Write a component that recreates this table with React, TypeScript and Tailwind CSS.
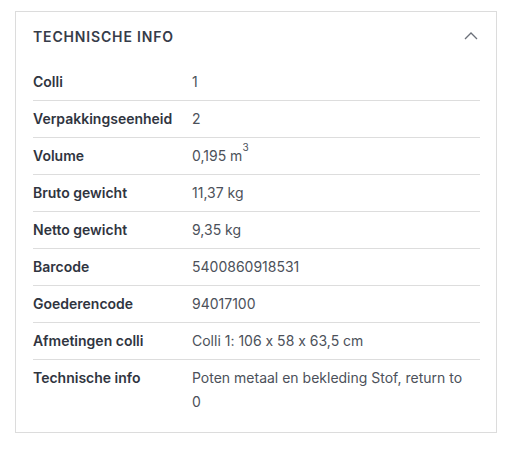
const rows: { label: string; value: React.ReactNode }[] = [
  { label: "Colli", value: "1" },
  { label: "Verpakkingseenheid", value: "2" },
  {
    label: "Volume",
    value: (
      <>
        0,195 m<sup className="text-[10px] align-[5px]">3</sup>
      </>
    ),
  },
  { label: "Bruto gewicht", value: "11,37 kg" },
  { label: "Netto gewicht", value: "9,35 kg" },
  { label: "Barcode", value: "5400860918531" },
  { label: "Goederencode", value: "94017100" },
  { label: "Afmetingen colli", value: "Colli 1: 106 x 58 x 63,5 cm" },
  { label: "Technische info", value: "Poten metaal en bekleding Stof, return to 0" },
];

export default function App() {
  return (
    <div className="min-h-screen bg-white pt-[11px] pl-[15px] pr-[9px] font-['Inter',sans-serif] [font-feature-settings:'calt'_0]">
      <div className="border border-[#dcdcdc] pl-[17px] pr-4 pt-3 pb-3">
        <div className="flex items-center justify-between h-6 mb-4">
          <h2 className="text-[14px] font-semibold tracking-[0.06em] text-[#363c49] uppercase">
            Technische info
          </h2>
          <svg width="14" height="8" viewBox="0 0 14 8" className="mr-0.5" fill="none">
            <path d="M1 7l6-6 6 6" stroke="#6b7079" strokeWidth="1.3" />
          </svg>
        </div>
        <div>
          {rows.map((r, i) => (
            <div
              key={r.label}
              className={`flex py-[6px] text-[14px] leading-6 ${
                i < rows.length - 1 ? "border-b border-[#dddddd]" : ""
              }`}
            >
              <div className="w-[159px] shrink-0 font-semibold text-[#30353f]">{r.label}</div>
              <div className="flex-1 pr-[10px] text-[#4c515a]">{r.value}</div>
            </div>
          ))}
        </div>
      </div>
    </div>
  );
}
